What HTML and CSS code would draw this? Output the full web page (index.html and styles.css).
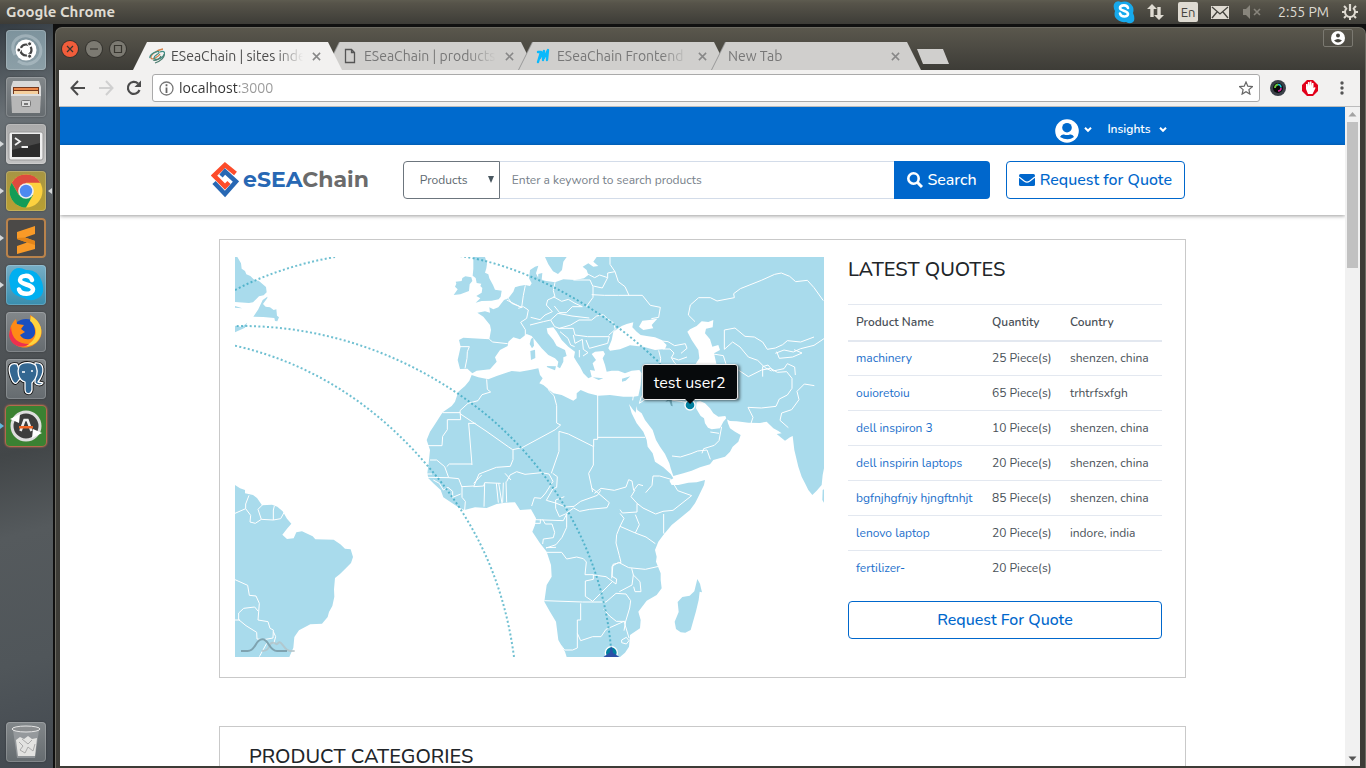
FILE: index.html
```html
<!DOCTYPE html>
<html lang="en">
<head>
<meta charset="utf-8">
<meta name="viewport" content="width=device-width, initial-scale=1">
<title>ESeaChain | sites index</title>
<link rel="stylesheet" href="styles.css">
</head>
<body>
<header class="panel">
  <span class="panel-title">Google Chrome</span>
  <div class="panel-tray">
    <svg width="22" height="24" viewBox="0 0 22 24"><path d="M1 4q2-4 7-2 8-2 12 5 1 3 0 6 2 4 1 8-3 4-8 1-7 1-11-5-1-3 0-6-2-3-1-7z" fill="#17a9ec"/><path d="M15 8c-1-4-8-3-8 0s8 2.500 8 6-7 3.500-8-.500" fill="none" stroke="#fff" stroke-width="2.600" stroke-linecap="round"/></svg>
    <svg class="tray-net" width="20" height="18" viewBox="0 0 20 18" fill="#dfdbd2"><path d="M6 1l5 5H7.700v8H4.300V6H1zM13 17l5-5h-3.300V4h-3.400v8H8z"/></svg>
    <span class="tray-lang">En</span>
    <svg class="tray-mail" width="18" height="13" viewBox="0 0 18 13"><path fill="#dfdbd2" d="M0 0h18v13H0z"/><path d="M1 1l8 7 8-7M1 12l5-6M17 12l-5-6" fill="none" stroke="#45443e" stroke-width="1.300"/></svg>
    <svg class="tray-sound" width="18" height="14" viewBox="0 0 18 14"><path fill="#88857c" d="M0 4h3l4-4v14l-4-4H0z"/><path d="M11 4l6 6M17 4l-6 6" stroke="#88857c" stroke-width="1.600"/></svg>
    <span class="tray-time">2:55 PM</span>
    <svg class="tray-power" width="18" height="18" viewBox="0 0 18 18" fill="none" stroke="#dfdbd2"><path d="M6 5a5 5 0 1 0 6 0" stroke-width="2"/><path d="M9 1v7" stroke-width="2.200"/><path d="M1 9h3M14 9h3M3 3l2 2M15 3l-2 2M3 15l2-2M15 15l-2-2M9 14v3" stroke-width="2"/></svg>
  </div>
</header>

<div class="desktop">
  <nav class="launcher" aria-label="Launcher">
    <button class="app app-dash" aria-label="Dash"><svg viewBox="0 0 40 40"><path d="M9 25C0 10 20-2 32 12 42 27 24 40 12 31" fill="none" stroke="#b4c3c9" stroke-width="3" opacity=".6"/><circle cx="20" cy="20" r="10.500" fill="#fff"/><circle cx="20" cy="20" r="5.500" fill="none" stroke="#444" stroke-width="2.200" stroke-dasharray="9.500 2" stroke-dashoffset="4"/><g fill="#444" stroke="#fff"><circle cx="12.800" cy="20" r="2"/><circle cx="23.600" cy="13.800" r="2"/><circle cx="23.600" cy="26.200" r="2"/></g></svg></button>
    <button class="app app-plain" aria-label="Files"><svg viewBox="0 0 40 40"><path d="M7 4h26l2 6v8H5v-8z" fill="#d9d9d9"/><path d="M7 10h26v7H7z" fill="#75391e"/><path d="M8 11h24v2H8z" fill="#ec8749"/><path d="M8 14h24v3H8z" fill="#f5cf9d"/><path d="M5 17h30l-1 19H6z" fill="#b7b7b7"/><path d="M5 17h30v2H5z" fill="#dedede"/><rect x="15.500" y="23.500" width="9" height="6" rx="1" fill="#ddd" stroke="#777"/><path d="M18 26h4v2h-4z" fill="#777"/></svg></button>
    <button class="app app-light run" aria-label="Terminal"><svg viewBox="0 0 40 40"><rect x="3" y="8" width="34" height="28" rx="2" fill="#eee" stroke="#999"/><path d="M6 10h28v23H6z" fill="#2b2b2b"/><path d="M6 10h28v9L6 26z" fill="#484848"/><path d="M9 14l5 3.500-5 3.500M15.500 23H22" fill="none" stroke="#eee" stroke-width="1.800"/></svg></button>
    <button class="app app-gold run" aria-label="Chrome"><svg viewBox="0 0 40 40"><circle cx="20" cy="20" r="16.500" fill="#fdd13f"/><path d="M5.700 11.800A16.500 16.500 0 0 1 34.300 11.800H20L13 24z" fill="#dd4b3e"/><path d="M5.700 11.800A16.500 16.500 0 0 0 20 36.500l7-12.400-14 .100z" fill="#149c57"/><circle cx="20" cy="20" r="7.800" fill="#eee"/><circle cx="20" cy="20" r="6.200" fill="#4d8af0"/></svg></button>
    <button class="app app-sublime run" aria-label="Sublime Text"><svg viewBox="0 0 40 40"><path d="M11 14L29 8v8l-10 3.500L29 23v8l-18 5v-8l10-3.500L11 21z" fill="#f99a27"/><path d="M19 19.500L29 23v4l-8-2.500L11 21v-1z" fill="#e2851a"/></svg></button>
    <button class="app app-skype run" aria-label="Skype"><svg viewBox="0 0 40 40"><path d="M5 8q5-8 15-3 12-1 16 12 4 14-6 17-6 3-12-1Q4 30 4 19q-2-6 1-11z" fill="#00aff0"/><path d="M26 15c-2-6-12-5-12 0s13 4 13 9.500-12 6-14 0" fill="none" stroke="#fff" stroke-width="4.500" stroke-linecap="round"/></svg></button>
    <button class="app app-plain" aria-label="Firefox"><svg viewBox="0 0 40 40"><circle cx="20" cy="21" r="14" fill="#1a4fc0"/><path d="M24 3c10 5 15 17 9 25-7 10-22 10-28 0C2 21 4 12 10 7l1 5 7 1-3 4 4 3-5 3c3 6 14 6 15-2 1-7-5-11-5-18z" fill="#ff8a16"/><path d="M25 4c10 5 13 16 8 23-4 6-9 7-13 7 14-8 11-20 4-25z" fill="#ffd43d"/><path d="M5 14c0 13 8 18 18 18-8 6-19 1-20-9z" fill="#ee314f"/></svg></button>
    <button class="app app-plain" aria-label="pgAdmin"><svg viewBox="0 0 40 40" fill="#336791" stroke-linejoin="round"><g stroke="#111" stroke-width="3"><path d="M11 5C1 3 2 12 6 21c3 6 5 3 7 0l3-3zM29 4c10-1 10 10 3 19l5 1c-2 3-6 2-8 0z"/><path d="M13 7c4-5 14-4 17 0 3 8 0 13-4 17v7c-1 5-7 5-7-1v-7c-7-2-8-10-6-16z"/></g><g stroke="#fff" stroke-width="1.300"><path d="M11 5C1 3 2 12 6 21c3 6 5 3 7 0l3-3zM29 4c10-1 10 10 3 19l5 1c-2 3-6 2-8 0z"/><path d="M13 7c4-5 14-4 17 0 3 8 0 13-4 17v7c-1 5-7 5-7-1v-7c-7-2-8-10-6-16z"/></g><path d="M16 13h3M25 12h2" stroke="#fff" stroke-width="1.500"/></svg></button>
    <button class="app app-update run" aria-label="Software Updater"><svg viewBox="0 0 40 40"><circle cx="20" cy="20" r="14" fill="#3c3c3c" stroke="#ddd" stroke-width="3"/><path d="M4 13l10-5-1 9zM36 27l-10 5 1-9z" fill="#fff"/><path d="M14.500 25l4-11h3l4 11" fill="none" stroke="#eee" stroke-width="2.600"/><path d="M13 20h14v2.500H13z" fill="#f06524"/></svg></button>
    <button class="app app-plain app-trash" aria-label="Trash"><svg viewBox="0 0 40 40"><path d="M7 8l4 28h18l4-28z" fill="#a5a8aa" opacity=".65"/><path d="M10 18l4-3 4 2 4-3 4 3 5-1-2 18H12z" fill="#e3e3e1"/><path d="M13 20l4 4-3 4 5 3 3-6 5 4 2-7M16 17l6 5 4-4" fill="none" stroke="#aaa"/><ellipse cx="20" cy="7" rx="14" ry="3" fill="#8b8e90" stroke="#e5e5e5"/></svg></button>
  </nav>

  <div class="window">
    <div class="titlebar">
      <div class="win-buttons">
        <button class="win-btn win-close" aria-label="Close"><svg viewBox="0 0 16 16"><path d="M5 5l6 6M11 5l-6 6"/></svg></button>
        <button class="win-btn" aria-label="Minimize"><svg viewBox="0 0 16 16"><path d="M4 8h8"/></svg></button>
        <button class="win-btn" aria-label="Maximize"><svg viewBox="0 0 16 16"><path d="M4.500 4.500h7v7h-7z"/></svg></button>
      </div>
      <div class="tabs">
        <div class="tab tab-active"><svg class="favicon" viewBox="0 0 16 16" fill="none" stroke-width="1.300"><path d="M14 1C8 2 1 7 2 10s8-2 9-4" stroke="#d3804a"/><path d="M1 10c-1-4 8-8 9-6s-5 3-5 6 8 1 10-3-2-4-4-3" stroke="#3f8e85"/><path d="M6 15c6-2 10-6 9-9M4 12c3 1 7-1 8-4" stroke="#4b7c6f"/></svg><span class="tab-title">ESeaChain | sites index</span><button class="tab-close" aria-label="Close tab"><svg viewBox="0 0 10 10"><path d="M1 1l8 8M9 1L1 9"/></svg></button></div>
        <div class="tab"><svg class="favicon" viewBox="0 0 16 16" fill="none" stroke="#555" stroke-width="1.300"><path d="M3.500 1.500h6l3 3v10h-9zM9.500 1.500v3h3"/></svg><span class="tab-title">ESeaChain | products</span><button class="tab-close" aria-label="Close tab"><svg viewBox="0 0 10 10"><path d="M1 1l8 8M9 1L1 9"/></svg></button></div>
        <div class="tab"><svg class="favicon" viewBox="0 0 16 16"><path d="M3 4h3L3 14M5 10l4-7-1 9M9 10l4-8-1 10" fill="none" stroke="#0bb9fb" stroke-width="2.400" stroke-linecap="round" stroke-linejoin="round"/></svg><span class="tab-title">ESeaChain Frontend</span><button class="tab-close" aria-label="Close tab"><svg viewBox="0 0 10 10"><path d="M1 1l8 8M9 1L1 9"/></svg></button></div>
        <div class="tab"><span class="tab-title">New Tab</span><button class="tab-close" aria-label="Close tab"><svg viewBox="0 0 10 10"><path d="M1 1l8 8M9 1L1 9"/></svg></button></div>
        <button class="new-tab" aria-label="New tab"></button>
      </div>
      <button class="profile" aria-label="Profile"><svg width="14" height="14" viewBox="0 0 14 14"><circle cx="7" cy="7" r="7" fill="#fff"/><circle cx="7" cy="4.500" r="2" fill="#45443e"/><path d="M3 9.500q4-3 8 0-4 4-8 0z" fill="#45443e"/></svg></button>
    </div>

    <div class="toolbar">
      <button class="tool" aria-label="Back"><svg width="16" height="16" viewBox="0 0 16 16" fill="none" stroke="#4b4b4b" stroke-width="2"><path d="M15 8H2M8 1L1.500 8 8 15"/></svg></button>
      <button class="tool" aria-label="Forward"><svg width="16" height="16" viewBox="0 0 16 16" fill="none" stroke="#d0d0d0" stroke-width="2"><path d="M1 8h13M8 1l6.500 7L8 15"/></svg></button>
      <button class="tool" aria-label="Reload"><svg width="16" height="16" viewBox="0 0 16 16"><path d="M13.500 10A6 6 0 1 1 12 3.500" fill="none" stroke="#4b4b4b" stroke-width="2.200"/><path d="M15 .500V7H8.500z" fill="#4b4b4b"/></svg></button>
      <div class="omnibox">
        <svg width="15" height="15" viewBox="0 0 15 15"><circle cx="7.500" cy="7.500" r="6.500" fill="none" stroke="#777" stroke-width="1.300"/><path d="M7.500 3.300v2M7.500 6.500V12" stroke="#666" stroke-width="1.800"/></svg>
        <input class="url" type="text" aria-label="Address" value="localhost:3000">
        <svg width="14" height="14" viewBox="0 0 14 14"><path d="M7 1l1.800 4.200 4.600.400-3.500 3 1 4.500L7 10.700l-3.900 2.400 1-4.500-3.500-3 4.600-.400z" fill="none" stroke="#666" stroke-width="1.200"/></svg>
      </div>
      <button class="tool" aria-label="Camera extension"><svg width="16" height="16" viewBox="0 0 16 16"><circle cx="8" cy="8" r="8" fill="#3b4149"/><circle cx="8" cy="8" r="5" fill="#080808"/><path d="M5 8q0-3 3-3.500" stroke="#67c93a" stroke-width="1.800" fill="none"/><path d="M8 4.500q3 0 3 3" stroke="#19c2d9" stroke-width="1.600" fill="none"/><path d="M11 8q0 3-3 3" stroke="#d4299d" stroke-width="1.500" fill="none"/></svg></button>
      <button class="tool tool-block" aria-label="Ad blocker"><svg width="16" height="16" viewBox="0 0 16 16"><path d="M5 0h6l5 5v6l-5 5H5l-5-5V5z" fill="#e2001a"/><path d="M4 9V4h1.500v3L6 2h1.500v4L8 1.500h1.500V6l.500-3h1.500v5l1.500-1 .500 1-3 6H6z" fill="#fff"/></svg></button>
      <button class="tool" aria-label="Menu"><svg width="4" height="14" viewBox="0 0 4 14" fill="#555"><circle cx="2" cy="2" r="1.700"/><circle cx="2" cy="7" r="1.700"/><circle cx="2" cy="12" r="1.700"/></svg></button>
    </div>

    <div class="viewport">
      <div class="page">
        <nav class="userbar">
          <a class="userlink" href="#" aria-label="Account"><svg width="24" height="24" viewBox="0 0 24 24"><circle cx="12" cy="12" r="11.800" fill="#fff"/><circle cx="12" cy="8.700" r="4.800" fill="#006acd"/><path d="M5 18q1-3 4-2.500 3 1 6 0 3-.500 4 2.500-6 4.500-14 0z" fill="#006acd"/></svg><svg class="caret" width="8" height="9" viewBox="0 0 8 9"><path d="M1 .800l3 3 3-3"/></svg></a>
          <a class="userlink userlink-text" href="#">Insights <svg class="caret" width="8" height="5" viewBox="0 0 8 5"><path d="M1 .800l3 3 3-3"/></svg></a>
        </nav>
        <header class="site-header">
          <div class="header-inner">
            <a class="logo" href="#"><svg width="28" height="36" viewBox="0 0 28 36" fill="none" stroke-width="4.500"><path d="M24.500 11.500L14 3 3 13.500l11 11 4-4" stroke="#fc4c2b"/><path d="M3 20.500L14 32l11-12.500-11-10-4 4.500" stroke="#2868b4"/></svg><span class="logo-text"><b>eSEA</b>Chain</span></a>
            <form class="search">
              <div class="search-kind"><select aria-label="Search in"><option>Products</option></select><svg width="6" height="7" viewBox="0 0 6 7"><path d="M0 0h6L3 7z" fill="#495760"/></svg></div>
              <input class="search-text" type="text" aria-label="Keyword" placeholder="Enter a keyword to search products">
              <button class="search-go" type="button"><svg width="16" height="16" viewBox="0 0 16 16" fill="none" stroke="#fff"><circle cx="6.500" cy="6.500" r="5.200" stroke-width="2.600"/><path d="M10.500 10.500l4.500 4.500" stroke-width="3"/></svg>Search</button>
            </form>
            <button class="outline-btn"><svg width="16" height="12" viewBox="0 0 16 12"><rect width="16" height="12" rx="1.500" fill="#0067cc"/><path d="M0 3l5.500 4.300q2.500 1.800 5 0L16 3" fill="none" stroke="#fff" stroke-width="1.200"/></svg>Request for Quote</button>
          </div>
        </header>

        <main class="content">
          <section class="card overview">
            <div class="map">
              <svg class="map-svg" viewBox="15 21 1767 1200" role="img" aria-label="World map of routes">
                <g class="land">
                  <path d="M15 21h7l11 19 2 16 10 7 4 10 12 5 13 13 12 1 22 19 2 16-9 9-14 3-8 8-10 10-12 2-42-3z"/>
                  <path d="M112 140l-14 10-13 28-15 22 30 1 33 3 2 9 7 1 5-12-6-5-2-19-8 2-11-8-13-2-8-8 13-18zM15 168l22 7-22-2zM15 227l20 4 17-13-7 15-30 14z"/>
                  <path d="M730 21h35l4 13 2 7-2 14-4 13 10 5 3 12 11 20 6 14 20 3-3 18-6 8-21 4-30 1-18 5 14-13-12-7 16-10 2-14-6-6 3-7-14-2-3-15-9-7 2-20z"/>
                  <path d="M677 95l18-2 2-9 9-5 18 3 3 11-8 10-2 20-26 10-20 2 12-17-8-8 4-9z"/>
                  <path d="M742 188L765 184 780 188 778 172 790 178 805 172 822 150 835 145 850 125 855 112 868 108 885 105 900 108 905 100 897 85 900 60 915 50 925 47 918 70 925 85 945 92 975 97 1000 88 1035 90 1062 85 1075 75 1070 60 1058 50 1075 40 1090 50 1105 48 1090 35 1100 21H1782V655L1778 675 1775 705 1760 722 1747 735 1735 720 1725 700 1715 680 1705 650 1693 600 1688 558 1680 562 1665 572 1652 562 1640 552 1655 550 1645 543 1630 535 1610 515 1590 519 1555 518 1520 514 1500 513 1490 508 1486 498 1465 500 1450 490 1440 475 1425 460 1410 453 1400 455 1398 475 1412 498 1422 505 1425 520 1434 533 1445 538 1470 535 1480 515 1490 503 1494 520 1500 535 1515 545 1532 555 1525 575 1508 590 1500 605 1485 620 1450 630 1440 643 1410 652 1385 662 1360 670 1330 678 1322 655 1318 640 1305 612 1290 590 1278 570 1268 540 1245 510 1235 490 1222 480 1220 468 1217 488 1208 478 1197 462 1205 490 1220 520 1240 545 1250 570 1253 590 1268 610 1275 635 1300 652 1322 672 1330 685 1318 692 1325 705 1345 705 1375 698 1400 697 1425 690 1422 705 1405 740 1395 760 1380 780 1350 805 1325 825 1300 855 1285 875 1275 900 1280 920 1278 935 1292 970 1292 990 1295 1015 1280 1035 1250 1052 1225 1085 1232 1110 1230 1135 1200 1155 1197 1190 1185 1208 1170 1221H1010L1005 1205 985 1170 978 1115 960 1085 943 1055 950 1005 965 980 963 945 950 905 930 880 907 845 915 825 918 805 903 778 870 780 855 757 825 758 800 762 770 774 735 772 703 780 685 772 640 742 632 720 610 700 595 685 592 670 596 640 600 600 590 570 600 545 610 530 638 487 665 468 675 455 685 425 705 408 718 392 725 375 745 382 775 388 800 378 845 363 870 365 900 360 925 355 930 375 938 385 928 400 940 405 970 430 995 435 1030 452 1040 445 1040 430 1052 420 1075 430 1105 437 1140 435 1180 440 1210 440 1225 438 1232 405 1235 370 1228 360 1205 362 1185 370 1165 362 1145 362 1130 365 1125 345 1118 325 1125 312 1120 303 1095 305 1085 312 1098 330 1088 340 1095 362 1080 360 1085 380 1075 385 1060 370 1050 350 1040 335 1032 322 1035 305 1015 290 995 270 980 245 970 232 950 235 953 250 970 270 980 288 1005 300 1010 318 1000 322 1000 335 990 355 982 350 985 335 975 325 955 315 935 295 915 270 905 258 890 252 870 268 850 262 835 275 833 288 810 300 795 322 800 335 780 358 740 362 727 370 712 356 690 357 683 330 692 290 687 270 700 263 778 268 783 240 780 225 760 200 742 188z"/>
                  <path d="M15 705l15 10 15 5 0 10 24 5 12 9 15 22 30-2 16 6 16 14 13 22 13 15-13 15-14 18 14 13 20-2 8-18 17-3 32 15 8 9 55 1 20 14 14 13 17 2 7 23-6 18-14 14-19 19-15 12-3 34 1 22-6 28-10 18-4 15-17 20-35 2-34 18-14 20-3 32-12 28H15z"/>
                  <path d="M1402 987l8 14 3 14 3 12-7-2-3 25-8 34-16 56-16 8-14-1-14-10-4-22 12-29-3-30 14-15 22-4 14-13z"/>
                  <path d="M903 267l7-5 2 25-6 8-7-13zM901 303l14-4 1 25-13 6zM950 348l28 1-3 12-23-9zM1088 382l32 3-14 5zM1176 386l25-7-14 13-11 3zM1778 720l4-2v40l-5-8zM945 21h65l-10 14-4 25-12 12-15-8-14-21zM925 72l12-3-2 20-11 3z"/>
                </g>
                <g class="sea">
                  <path d="M1135 295L1145 270 1150 245 1175 228 1190 222 1210 217 1207 232 1220 245 1232 255 1250 258 1275 262 1295 270 1310 285 1305 297 1275 300 1240 290 1200 286 1170 298 1140 302z"/>
                  <path d="M1227 230L1237 212 1258 210 1282 206 1265 225 1270 235 1240 240z"/>
                  <path d="M1372 245L1380 238 1400 228 1415 214 1435 216 1450 210 1448 232 1428 236 1425 250 1440 268 1447 290 1465 285 1470 300 1452 310 1460 345H1395L1408 325 1405 300 1385 270z"/>
                </g>
                <g class="borders">
                  <path d="M15 790l32-14 0-14 10-26M47 776l15 20-2 20 16 4 18-12-10-30 14-14M94 808l36 2 22-4 11-20M130 810l0-30 3-12M15 989l38 17 5 30 20 2 10 22-4 50 30 5 6 20 10 5-1 24-28 5-20-2-1-20-32-20-22-18 0-20 15-14 33-4 10 12M15 1110h15M110 1180l-22 40M130 1145l7 15-6 22"/>
                  <path d="M778 268l10 8 45 5M690 290l28 0-6 15-1 20-6 30M865 175l15-5 15 10-5 25-18 12 14 22 0 20M835 145l10 15 30 12 5-36 6-30M830 150l44 22"/>
                  <path d="M975 97l-5 25 5 18-22 10-4 15 18 20-22 10-15 14-28-7M970 140l25 14 20-6 20 12 22 10-30 0-18 18-20 0-16-20M1030 90l50 0 9 20 0 32-20 28M1060 65l34 18 15-8 24 8 0-14 22-4-15-22 0-22M1133 83l-16 31-27-6M1155 65l10 30 20 15 12 26-32 0-42 0-38-2M1197 136l40 0 24 30 30 6-5 30-22 4"/>
                  <path d="M900 225l40-10 22-5 22-20 42 8 52 6M962 210l12 20 14 5 34-10 25-15 38 0 15-12 20-4 12 12 18 12 6 20-20 18M985 235l20 0 25 0 5 20 38 5 65 0-5 20-55 15-10-25M990 245l24 20 8 20 12 5M1030 255l5 25 22-12 3 30 14 10-15 10M1048 300l0 22"/>
                  <path d="M1266 262l20 10 28 3 20 12 32-6 5 14-18 15M1298 297l22 0 12 12-8 14 22 7 25-9M1324 323l10 16 18 14M1234 440l30-35 28-20-4-30 4-30-6-24M1212 425l-4 26M1234 440l-6 20 30-20M1358 455l-36-5-40-35M1358 455l28 7M1525 445l-5-70-28-20-12-38-30-5"/>
                  <path d="M1395 215l-20-20 6-30 25-22 35 0 20 10 52-10-2-12 20-15 63-25 40-18 20-4 25 10 18 16 35-4 20 22 28 39M1483 298l0-58 32-6 30 25 28 2 25 15 14 22 24-4 22-10 14-12 40 4 40-15M1483 298l25-22 22 15 25 30 28 10 22 22 20 10M1598 380l0-30 16-5 15 18 33-7 10-15 22 10 2 24M1636 310l26-10 28 6 22-10 40-10 30-20M1640 305l8 20 40-4 28-12-24-10"/>
                  <path d="M1525 360l30 20 40-20 27-5 20 12 28-2 16 20 0 30-14 20-24 12-10 22-44 5-40-2 15 30-15 45M1675 533l-25-22 5-22 30-10 22-30-6-25 22-22 30 5"/>
                  <path d="M770 388l2 30 10 8-26 8-12 18-30 8-24 22 2 27-40 0 0 30-14 20-2 28-46 0M637 488h53M690 491l78 52 68 48 12 8 28-6 100-54 16-14-12-6 0-52-8-30-14-14-12-30 8-30M716 520l10 125M715 520h22M849 599l0 30-8 20-42 3-52 20-16 38M987 544l28 8 76 38 0-22 12 0 0-133M1103 562h142M1090 590v55l-14 25 12 56M987 544l0 60-23 66"/>
                  <path d="M600 630l20 0 24 20 12 33-65-1M656 683l30 3 10 26 0 30 10 12-2 26M650 650l8-8 68 0M590 672h16M610 690l18 10 12 20 14-8 14 12 0 18 24-10M731 710l30-2 3-10 48 2M764 700l-2 70M799 700l6 58M806 700l10 60M820 698l-2 60M828 695l2 62M695 710l36-2M731 700l24-25M830 695l10-20 20-10 25 8 50-5 22 4 12 22-22 35-14 16-20-2-8 25M843 690l-18-20"/>
                  <path d="M968 670l14 10-2 32-11 4-20 35 28 8 30 12 25-2 20-15 50-18 10-15M1003 740l-26 10 0 25 11 25 18-8 25-18 18 10 30-6 52-5 7-15-35-30-18-14M1093 730l20-15 40 6 35-10 8-22 10 4 5 28 14-18 14 4M1215 720l-12 20 18 20 0 26-44 3-7-10M1221 760l18 14 38 18 22-8 30-3 56-44-42-15-20-34-34-10-20 0-3 28-19 22M1301 792l0 58 14 12M1170 790l12 15-12 24 46 20 32 12 28 20M1216 849l12-25-12-30M1170 829l-10 25-2 25 10 38 5 20-24 6-4 42"/>
                  <path d="M915 809l85 3 10-20 0 40-14 30-18 22-30 10M915 820l16 0 0-12M938 808l8 14 20 0 8 25-4 16-30 4-2 15M948 893l30-1M950 907l45 0 15 20 30-6 20 5 9 10-4 38 25 0 0 14-24 5 0 46 22 15 60-60M1090 975l38 5 30 22 2-15-14-8 0-30 20-12 30 16 50 5 45-10M1205 955l5 20-4 30-38 20M1210 975l20 20 3 30-18 0-4-15M943 1052l115 4 70 0 30-26 30 2 14 20-3 22-12 40-28 0-20-16-18-20M1052 1060v50h-10v84l-14 6-24 0-11-14M1042 1150l10 22 36-12 25 0 15-22 54-24 15 50M1175 1170l14-8 8 10-8 10-14-4zM1187 1114l-5 28"/>
                  <path d="M1326 618l25 3 32-10 20-8 28-3 10 28M1475 530l-8 42-14 14-32 10-5 14M1467 550l-26-4"/>
                </g>
                <g class="routes">
                  <path d="M15 120Q150 50 315 21"/>
                  <path d="M690 18C850 40 1080 140 1285 335L1380 460"/>
                  <path d="M20 228C300 225 560 325 770 495 990 680 1120 930 1143 1195"/>
                  <path d="M15 287C270 345 460 490 595 650 725 800 820 980 852 1221"/>
                </g>
                <circle class="pin" cx="1380" cy="465" r="15"/>
                <path d="M1306 455l12-2 5 14 5 2-3-18 13-3 0-5-20 2-18-5-2 4 13 7z" fill="#6ca4b5"/>
                <circle class="pin" cx="1144" cy="1208" r="18"/>
                <path d="M1143 1188l4 10 2 10 18 12-1 8h-45v-8l18-12z" fill="#2b4fa7"/>
                <g fill="none" stroke-width="6"><path d="M170 1203c20 0 12-24 26-24 10 0 8 14 18 8" stroke="none"/><path d="M95 1203c30 0 20-25 32-25s12 10 18 0c10-8 18 25 35 25h14" stroke="#b3c3c8" opacity=".8"/><path d="M33 1203h20c25 0 22-35 44-35 20 0 20 35 44 35h30" stroke="#7fa3b0"/></g>
              </svg>
              <div class="tooltip" role="tooltip">test user2</div>
            </div>
            <div class="quotes">
              <h2 class="heading">LATEST QUOTES</h2>
              <table class="quote-table">
                <thead><tr><th>Product Name</th><th>Quantity</th><th>Country</th></tr></thead>
                <tbody>
                  <tr><td><a href="#">machinery</a></td><td>25 Piece(s)</td><td>shenzen, china</td></tr>
                  <tr><td><a href="#">ouioretoiu</a></td><td>65 Piece(s)</td><td>trhtrfsxfgh</td></tr>
                  <tr><td><a href="#">dell inspiron 3</a></td><td>10 Piece(s)</td><td>shenzen, china</td></tr>
                  <tr><td><a href="#">dell inspirin laptops</a></td><td>20 Piece(s)</td><td>shenzen, china</td></tr>
                  <tr><td><a href="#">bgfnjhgfnjy hjngftnhjt</a></td><td>85 Piece(s)</td><td>shenzen, china</td></tr>
                  <tr><td><a href="#">lenovo laptop</a></td><td>20 Piece(s)</td><td>indore, india</td></tr>
                  <tr><td><a href="#">fertilizer-</a></td><td>20 Piece(s)</td><td></td></tr>
                </tbody>
              </table>
              <button class="outline-btn outline-wide">Request For Quote</button>
            </div>
          </section>
          <section class="card categories">
            <h2 class="heading">PRODUCT CATEGORIES</h2>
          </section>
        </main>
      </div>
      <div class="scrollbar" aria-hidden="true">
        <svg viewBox="0 0 15 15"><path d="M3.500 9.500h8l-4-4.500z"/></svg>
        <div class="thumb"></div>
        <svg viewBox="0 0 15 15"><path d="M3.500 5.500h8l-4 4.500z" fill="#555"/></svg>
      </div>
    </div>
  </div>
</div>
</body>
</html>
```
FILE: styles.css
```css
* { box-sizing: border-box; }

body {
  margin: 0;
  height: 100vh;
  display: flex;
  flex-direction: column;
  overflow: hidden;
  background: #101010;
  font-family: Ubuntu, "Open Sans", "Noto Sans", sans-serif;
}

button {
  margin: 0;
  padding: 0;
  border: 0;
  background: none;
  font: inherit;
  cursor: pointer;
}

a { color: inherit; text-decoration: none; }
svg { display: block; flex: none; }

/* Desktop panel */
.panel {
  flex: none;
  height: 24px;
  display: flex;
  align-items: center;
  justify-content: space-between;
  padding: 0 7px 0 6px;
  background: linear-gradient(#5e5c50, #57544a 3px, #3d3c37);
  color: #dfdbd2;
  font-size: 14px;
  line-height: 22px;
}
.panel-title { font: 700 15px/22px Ubuntu, "Noto Sans", sans-serif; }
.panel-tray { display: flex; align-items: center; }
.tray-net { margin-left: 11px; }
.tray-lang {
  width: 20px;
  margin-left: 12px;
  border-radius: 2px;
  background: #dfdbd2;
  color: #45443e;
  font-size: 13px;
  line-height: 20px;
  text-align: center;
}
.tray-mail { margin-left: 13px; }
.tray-sound { margin-left: 14px; }
.tray-time { margin-left: 17px; }
.tray-power { margin-left: 12px; }

.desktop { flex: 1; min-height: 0; display: flex; }

/* Launcher */
.launcher {
  flex: none;
  width: 53px;
  display: flex;
  flex-direction: column;
  gap: 7px;
  padding: 6px 7px 6px 6px;
  background: linear-gradient(165deg, #343c43, #697075 12%, #585d60 30%, #4b4f52 48%, #424648 57%, #555a5d 68%, #50565a 85%, #434950);
}
.app {
  position: relative;
  width: 40px;
  height: 40px;
  border-radius: 4px;
  box-shadow: inset 0 0 0 1px #ffffff30, 0 0 2px #0006;
}
.app-dash { background: linear-gradient(#7d939d, #8c9fa7); }
.app-plain { background: linear-gradient(#82878a, #656b6f); }
.app-light { background: linear-gradient(#aaa, #c2c2c2); }
.app-gold { background: linear-gradient(#a79544, #b89f32); }
.app-sublime { background: #4b4947; box-shadow: inset 0 0 0 2px #b9834c; }
.app-skype { background: linear-gradient(#78aec5, #398eae); }
.app-update { background: #3b8132; box-shadow: 0 0 2px 1px #db7750; }
.app-trash { margin-top: auto; }
.run::before {
  content: "";
  position: absolute;
  left: -6px;
  top: 17px;
  border: 3px solid transparent;
  border-left: 4px solid #d5d8da;
}
.app-update::before { border-left-color: #62b8dc; }
.app-gold::after {
  content: "";
  position: absolute;
  right: -6px;
  top: 17px;
  border: 3px solid transparent;
  border-right: 4px solid #d5d8da;
}

/* Browser window */
.window {
  flex: 1;
  min-width: 0;
  display: flex;
  flex-direction: column;
  margin: 3px 0 0 2px;
  padding: 0 5px 2px 3px;
  border: 1px solid #6d6b62;
  border-bottom: 0;
  border-radius: 7px 7px 0 0;
  background: linear-gradient(#5a574d, #3d3c37 42px);
}
.titlebar { flex: none; height: 42px; display: flex; align-items: flex-end; }
.win-buttons { display: flex; align-self: center; gap: 8px; padding: 0 0 0 3px; }
.win-btn {
  width: 16px;
  height: 16px;
  border-radius: 50%;
  background: #7c7a72;
  box-shadow: 0 0 0 1px #34332e;
}
.win-btn path { fill: none; stroke: #37352f; stroke-width: 1.2; }
.win-close { background: #f15d3b; }

.tabs { flex: 1; min-width: 0; display: flex; align-items: flex-end; padding-left: 7px; }
.tab {
  position: relative;
  z-index: 0;
  flex: 0 1 209px;
  min-width: 0;
  height: 28px;
  display: flex;
  align-items: center;
  padding: 0 21px 0 16px;
  margin-right: -16px;
  color: #777;
  font-size: 14px;
  line-height: 20px;
  filter: drop-shadow(-1px 0 0 #999);
}
.tab::before {
  content: "";
  position: absolute;
  z-index: -1;
  inset: 0;
  background: #d0cfcd;
  clip-path: polygon(0 100%, 14px 0, calc(100% - 14px) 0, 100% 100%);
}
.tab-active { z-index: 2; color: #4c4c4c; filter: none; }
.tab-active::before { background: #f2f1f0; }
.favicon { width: 16px; height: 16px; margin-right: 6px; }
.tab-title {
  flex: 1;
  min-width: 0;
  overflow: hidden;
  white-space: nowrap;
  -webkit-mask-image: linear-gradient(90deg, #000 calc(100% - 28px), transparent);
  mask-image: linear-gradient(90deg, #000 calc(100% - 28px), transparent);
}
.tab-close { width: 9px; height: 9px; margin-left: 9px; }
.tab-close path { stroke: #888; stroke-width: 1.7; }
.new-tab {
  width: 32px;
  height: 15px;
  margin: 0 0 6px 12px;
  background: #d0cfcd;
  clip-path: polygon(0 0, 26px 0, 100% 100%, 6px 100%);
}
.profile {
  align-self: flex-start;
  margin: 1px 7px 0 0;
  padding: 1px 7px;
  border: 1px solid #7b7971;
  border-radius: 2px;
}

.toolbar {
  flex: none;
  height: 37px;
  display: flex;
  align-items: center;
  padding: 0 16px 0 11px;
  background: #f2f1f0;
  border-bottom: 1px solid #bcbcbc;
}
.tool + .tool { margin-left: 12px; }
.tool-block + .tool { margin-left: 22px; }
.tool-block.tool { margin-left: 16px; }
.omnibox {
  flex: 1;
  height: 28px;
  display: flex;
  align-items: center;
  gap: 5px;
  margin: 0 10px;
  padding: 0 6px;
  border: 1px solid #aaa;
  border-radius: 3px;
  background: #fff;
}
.url {
  flex: 1;
  min-width: 0;
  padding: 0;
  border: 0;
  outline: 0;
  background: linear-gradient(90deg, #333 59px, #999 59px);
  -webkit-background-clip: text;
  background-clip: text;
  color: transparent;
  font: 14px/20px "Open Sans", "Noto Sans", sans-serif;
}

.viewport { flex: 1; min-height: 0; display: flex; margin-left: 1px; background: #fff; }
.page {
  flex: 1;
  min-width: 0;
  overflow: hidden;
  background: #fff;
  color: #495057;
  font: 12px/18px Nunito, "Open Sans", sans-serif;
}
.scrollbar {
  flex: none;
  width: 15px;
  display: flex;
  flex-direction: column;
  background: #f1f1f1;
}
.scrollbar svg { width: 15px; height: 15px; fill: #a3a3a3; }
.thumb { height: 146px; margin: 0 2px auto; background: #c1c1c1; }

/* Site */
.userbar {
  height: 38px;
  display: flex;
  justify-content: flex-end;
  align-items: center;
  gap: 15px;
  padding: 10px max(16px, calc(50% - 464px)) 0 16px;
  background: #006acd;
  color: #fff;
}
.userlink { display: flex; align-items: center; gap: 5px; }
.userlink-text { gap: 8px; padding-bottom: 4px; font-weight: 600; }
.caret { fill: none; stroke: #fff; stroke-width: 2; }

.site-header {
  position: relative;
  padding: 16px;
  background: #fff;
  box-shadow: 0 1px 4px #0006;
}
.header-inner {
  max-width: 967px;
  display: flex;
  align-items: center;
  margin: 0 auto;
  padding-right: 1px;
}
.logo { display: flex; align-items: center; gap: 4px; margin-left: -8px; }
.logo-text { color: #6b6b6b; font: 700 22px/30px Montserrat, "Open Sans", sans-serif; }
.logo-text b { color: #2868b4; font-weight: 700; }
.search { flex: 1; min-width: 0; display: flex; height: 38px; margin: 0 16px 0 34px; }
.search-kind { position: relative; flex: none; width: 97px; }
.search-kind select {
  width: 100%;
  height: 100%;
  padding: 0 16px;
  border: 1px solid #6c757d;
  border-radius: 4px 0 0 4px;
  appearance: none;
  background: #fff;
  color: #5d686f;
  font: 12px/18px Nunito, "Open Sans", sans-serif;
}
.search-kind svg { position: absolute; right: 6px; top: 15px; pointer-events: none; }
.search-text {
  flex: 1;
  min-width: 0;
  padding: 0 12px;
  border: 1px solid #d3dce9;
  border-width: 1px 0;
  font: 12px/18px Nunito, "Open Sans", sans-serif;
}
.search-text::placeholder { color: #77818a; }
.search-go {
  display: flex;
  align-items: center;
  gap: 4px;
  padding: 0 13px;
  border-radius: 0 4px 4px 0;
  background: #0067cc;
  color: #fff;
  font-size: 16px;
  font-weight: 500;
}
.outline-btn {
  height: 38px;
  display: flex;
  align-items: center;
  justify-content: center;
  gap: 5px;
  padding: 0 12px;
  border: 1px solid #0067cc;
  border-radius: 4px;
  color: #0067cc;
  font-size: 16px;
  font-weight: 500;
  white-space: nowrap;
}
.outline-wide { width: 100%; margin-top: 15px; }

.content {
  max-width: 967px;
  display: flex;
  flex-direction: column;
  gap: 48px;
  margin: 24px auto 0;
}
.card { border: 1px solid #c9c9c9; background: #fff; }
.overview { display: flex; gap: 24px; padding: 17px 23px 20px 15px; }
.map { position: relative; flex: 1; min-width: 0; align-self: flex-start; }
.map-svg { width: 100%; height: auto; }
.land { fill: #a9dbec; }
.sea { fill: #fff; }
.borders { fill: none; stroke: #fff; stroke-width: 3; stroke-linejoin: round; }
.routes { fill: none; stroke: #249fba; stroke-width: 6; stroke-dasharray: 6 7; opacity: .65; }
.pin { fill: #007f9f; stroke: #fff; stroke-width: 4; }
.tooltip {
  position: absolute;
  left: 77.2%;
  bottom: 64.2%;
  transform: translateX(-50%);
  padding: 6px 11px 4px;
  border: 1px solid #eee;
  border-radius: 3px;
  background: #070a0c;
  box-shadow: 1px 1px 3px #0008;
  color: #fff;
  font-size: 16px;
  line-height: 24px;
  white-space: nowrap;
}
.tooltip::after {
  content: "";
  position: absolute;
  left: 50%;
  top: 100%;
  margin-left: -5px;
  border: 5px solid transparent;
  border-top-color: #070a0c;
}

.quotes { flex: none; width: 314px; }
.heading { margin: 0; color: #212529; font-size: 20px; font-weight: 500; line-height: 26px; }
.quote-table {
  width: 100%;
  margin-top: 21px;
  border-collapse: collapse;
  table-layout: fixed;
  text-align: left;
  white-space: nowrap;
}
.quote-table th, .quote-table td { height: 35px; padding: 0 8px; border-top: 1px solid #e3e8f0; }
.quote-table th { height: 36px; font-weight: 600; border-bottom: 2px solid #e3e8f0; }
.quote-table th:nth-child(1) { width: 136px; }
.quote-table th:nth-child(2) { width: 78px; }
.quote-table a { color: #1c6fcb; }

.categories { padding: 17px 29px 40px; }
```
